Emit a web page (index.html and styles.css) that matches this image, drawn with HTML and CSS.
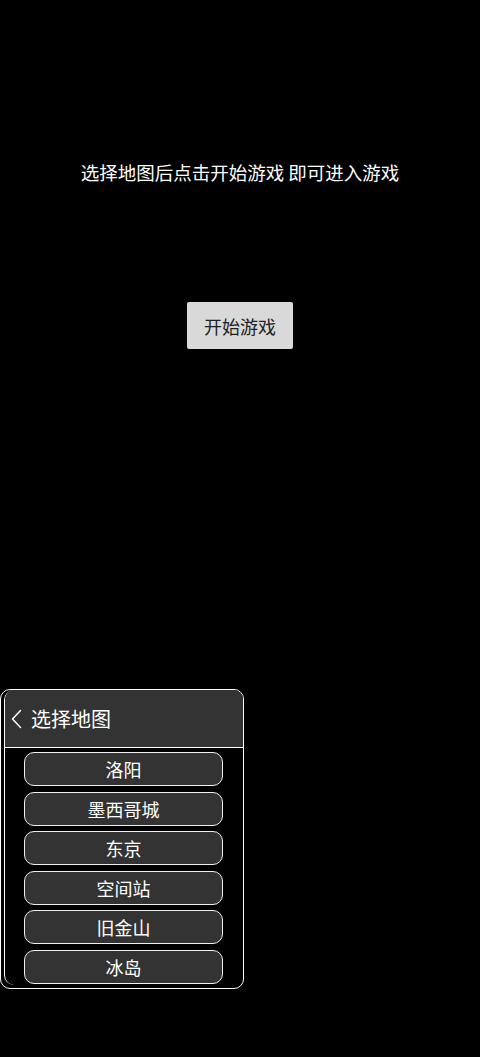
FILE: index.html
```html
<!DOCTYPE html>
<html lang="zh-CN">
<head>
<meta charset="utf-8">
<title>选择地图</title>
<link rel="stylesheet" href="styles.css">
</head>
<body>
<main class="screen">
  <p class="intro">选择地图后点击开始游戏 即可进入游戏</p>
  <div class="start-row">
    <button class="start-btn" type="button">开始游戏</button>
  </div>
  <section class="map-panel">
    <div class="map-inner">
      <header class="map-header">
        <svg class="back-icon" width="14" height="20" viewBox="0 0 14 20" aria-hidden="true">
          <polyline points="10.5,1.5 2.5,10 10.5,18.5" fill="none" stroke="#fff" stroke-width="1.5" stroke-linecap="round" stroke-linejoin="round"/>
        </svg>
        <span class="map-title">选择地图</span>
      </header>
      <ul class="map-list">
        <li class="map-item">洛阳</li>
        <li class="map-item">墨西哥城</li>
        <li class="map-item">东京</li>
        <li class="map-item">空间站</li>
        <li class="map-item">旧金山</li>
        <li class="map-item">冰岛</li>
      </ul>
    </div>
  </section>
</main>
</body>
</html>
```
FILE: styles.css
```css
html, body {
  margin: 0;
  padding: 0;
  background: #000;
}

body {
  font-family: "Noto Sans CJK SC", "Noto Sans", sans-serif;
  color: #fff;
}

.screen {
  width: 480px;
  height: 1057px;
  display: flex;
  flex-direction: column;
}

.intro {
  margin: 160px 0 0;
  font-size: 18.5px;
  line-height: 25px;
  text-align: center;
}

.start-row {
  margin-top: 117px;
  display: flex;
  justify-content: center;
}

.start-btn {
  width: 106px;
  height: 47px;
  border: none;
  border-radius: 2px;
  background: #d9d9d9;
  color: #222;
  font-family: inherit;
  font-size: 18px;
  padding: 0;
}

.map-panel {
  margin-top: 340px;
  width: 244px;
  height: 300px;
  box-sizing: border-box;
  border: 1px solid #fff;
  border-radius: 10px;
  display: flex;
}

.map-inner {
  flex: 1;
  margin: 0 0 3px 3px;
  border-left: 1px solid #fff;
  border-radius: 10px 0 0 10px;
  overflow: hidden;
  display: flex;
  flex-direction: column;
}

.map-header {
  height: 57px;
  border-bottom: 1px solid #fff;
  background: #333;
  display: flex;
  align-items: center;
  padding-left: 5px;
  gap: 7px;
  border-top-right-radius: 9px;
}

.back-icon {
  display: block;
  margin-top: 1px;
}

.map-title {
  font-size: 20px;
  line-height: 28px;
}

.map-list {
  list-style: none;
  margin: 0;
  padding: 4px 20px 1px 19px;
  display: flex;
  flex-direction: column;
  gap: 5.6px;
}

.map-item {
  height: 34px;
  box-sizing: border-box;
  border: 1px solid #f0f0f0;
  border-radius: 10px;
  background: #333;
  font-size: 18px;
  line-height: 32px;
  text-align: center;
}
```
